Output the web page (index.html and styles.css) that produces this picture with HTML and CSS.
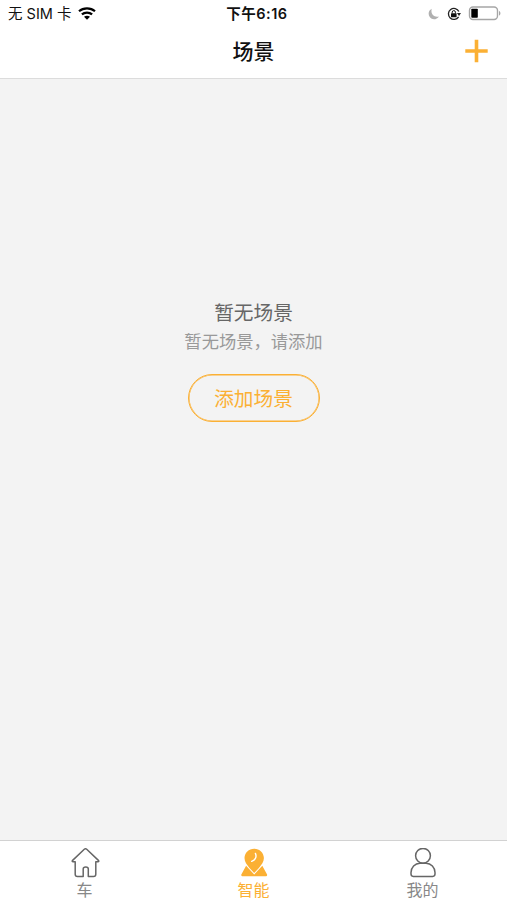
FILE: index.html
```html
<!DOCTYPE html>
<html lang="zh-CN">
<head>
    <meta charset="UTF-8">
    <meta name="viewport" content="width=device-width, initial-scale=1.0">
    <title>场景</title>
    <link rel="stylesheet" href="styles.css">
</head>

<body>
    <header class="header">
        <div class="status-bar">
            <div class="status-left">
                <span>无 SIM 卡</span>
                <svg class="wifi" width="18" height="13" viewBox="0 0 18 13">
                    <path d="M1 4.300C5.400.4 12.600.4 17 4.300M3.900 7.400c2.800-2.500 7.400-2.500 10.200 0" fill="none" stroke="#000" stroke-width="2.200"/>
                    <path d="M6 9.800c1.700-1.400 4.300-1.400 6 0L9 12.800z"/>
                </svg>
            </div>
            <div class="status-time">下午6:16</div>
            <div class="status-right">
                <svg width="12" height="12" viewBox="0 0 12 12">
                    <path d="M3.800.8C2.300 5.500 5.700 9.700 11 8.400 8.800 11.800 4.200 12.200 1.900 9.300-.3 6.500.4 2.500 3.800.8z" fill="#b0b0b0"/>
                </svg>
                <svg width="14" height="14" viewBox="0 0 14 14">
                    <path d="M11.600 9.800A5.500 5.500 0 1 1 11.900 4.500" fill="none" stroke="#222" stroke-width="1.300"/>
                    <path d="M9.900 6h4.100l-2 2.900z" fill="#222"/>
                    <rect x="4" y="6.200" width="5.600" height="4" rx=".5" fill="#111"/>
                    <path d="M5.200 6.400V5.200a1.600 1.600 0 0 1 3.200 0v1.200" fill="none" stroke="#111" stroke-width="1"/>
                </svg>
                <svg width="33" height="15" viewBox="0 0 33 15">
                    <rect x="1.500" y="1" width="28" height="12.500" rx="3.500" fill="#fff" stroke="#a6a6a6" stroke-width="1.400"/>
                    <path d="M31 5c1.900.6 1.900 4 0 4.600z" fill="#a6a6a6"/>
                    <rect x="3.300" y="2.800" width="6.500" height="9" rx=".8"/>
                </svg>
            </div>
        </div>
        <div class="nav-bar">
            <h1>场景</h1>
            <button class="add-icon" aria-label="添加">
                <svg width="24" height="24" viewBox="0 0 24 24">
                    <path d="M12.500.8v22.400M1.300 12h22.400" fill="none" stroke="#fbb034" stroke-width="3.600"/>
                </svg>
            </button>
        </div>
    </header>

    <main class="content">
        <h2>暂无场景</h2>
        <p>暂无场景，请添加</p>
        <button class="add-btn">添加场景</button>
    </main>

    <nav class="tab-bar">
        <a class="tab">
            <svg width="30" height="30" viewBox="0 0 30 30">
                <path d="M5.200 13.800H3.100c-1 0-1.200-.7-.5-1.400L14.300 1.300c.8-.7 1.600-.7 2.400 0l11.700 11.100c.7.7.5 1.400-.5 1.400h-2.100v12.400c0 1.400-.9 2.300-2.300 2.300h-5.200v-7.400c0-2.800-5.100-2.800-5.100 0v7.400H7.500c-1.400 0-2.300-.9-2.300-2.300z" fill="none" stroke="#666" stroke-width="1.500" stroke-linejoin="round"/>
            </svg>
            <span>车</span>
        </a>
        <a class="tab active">
            <svg width="30" height="30" viewBox="0 0 30 30">
                <path d="M15.200.8c5.400 0 9.700 4.100 9.700 9.300 0 3.600-2.400 6.900-5 9.800L15.200 25l-4.700-5.100c-2.600-2.900-5-6.200-5-9.800 0-5.200 4.300-9.300 9.700-9.300z" fill="#fbb034"/>
                <path d="M7.100 17.800 15.200 26.600l8.100-8.800 4.500 8.100c.8 1.400.2 2.400-1.300 2.400H3.900c-1.500 0-2.100-1-1.300-2.400z" fill="#fbb034"/>
                <path d="M16.400 5.400c1.500 3.200.2 6.400-3.700 8" fill="none" stroke="#fff" stroke-width="1.400" stroke-linecap="round"/>
            </svg>
            <span>智能</span>
        </a>
        <a class="tab">
            <svg width="30" height="30" viewBox="0 0 30 30">
                <g fill="none" stroke="#666" stroke-width="1.500">
                    <circle cx="15" cy="7.800" r="7.400"/>
                    <path d="M12 15.200C6.900 15.200 3 19.400 3 24.600v1.500c0 1.500.8 2.300 2.300 2.300h19.400c1.500 0 2.300-.8 2.300-2.300v-1.500c0-5.200-3.900-9.400-9-9.400z"/>
                </g>
            </svg>
            <span>我的</span>
        </a>
    </nav>
</body>
</html>
```

FILE: styles.css
```css
* {
    box-sizing: border-box;
}

body {
    font-family: Inter, "Noto Sans CJK SC", sans-serif;
    display: flex;
    flex-direction: column;
    height: 100vh;
    margin: 0;
    background: #f3f3f3;
    color: #111;
}

h1, h2, p {
    margin: 0;
}

button {
    font-family: inherit;
    background: none;
    cursor: pointer;
}

svg {
    display: block;
    flex-shrink: 0;
}

.header {
    height: 79px;
    background: #fff;
    border-bottom: 1px solid #dcdcdc;
}

.status-bar {
    display: grid;
    grid-template-columns: 1fr auto 1fr;
    align-items: center;
    height: 27px;
    padding: 0 6px 0 8px;
    font-size: 14.5px;
    line-height: 27px;
}

.status-left {
    display: flex;
    align-items: center;
    gap: 7px;
}

.status-time {
    padding-left: 5px;
    font-weight: 600;
    letter-spacing: 0.5px;
}

.status-right {
    display: flex;
    align-items: center;
    justify-content: flex-end;
    gap: 7px;
}

.nav-bar {
    display: grid;
    grid-template-columns: 1fr auto 1fr;
    align-items: center;
    height: 48px;
    padding: 0 19px;
}

.nav-bar h1 {
    grid-column: 2;
    padding-top: 1px;
    font-size: 21px;
    font-weight: 500;
    line-height: 30px;
}

.add-icon {
    justify-self: end;
    padding: 0;
    border: none;
}

.content {
    flex: 1;
    display: flex;
    flex-direction: column;
    align-items: center;
    padding-top: 219px;
}

.content h2 {
    color: #666;
    font-size: 19.7px;
    font-weight: 400;
    line-height: 30px;
}

.content p {
    color: #999;
    font-size: 17.3px;
    line-height: 28px;
}

.add-btn {
    width: 132px;
    height: 48px;
    margin-top: 18px;
    padding: 2px 0 0;
    border: 1px solid #fbb034;
    border-radius: 24px;
    box-shadow: inset 0 0 0 0.5px #fbb034;
    color: #fbb034;
    font-size: 19.7px;
    line-height: 44px;
}

.tab-bar {
    display: flex;
    height: 60px;
    background: #fff;
    border-top: 1px solid #d2d2d2;
}

.tab {
    flex: 1;
    display: flex;
    flex-direction: column;
    align-items: center;
    padding-top: 7px;
    color: #888;
    font-size: 16px;
    line-height: 22px;
}

.tab span {
    padding-top: 1px;
}

.tab.active {
    color: #fbb034;
}
```
